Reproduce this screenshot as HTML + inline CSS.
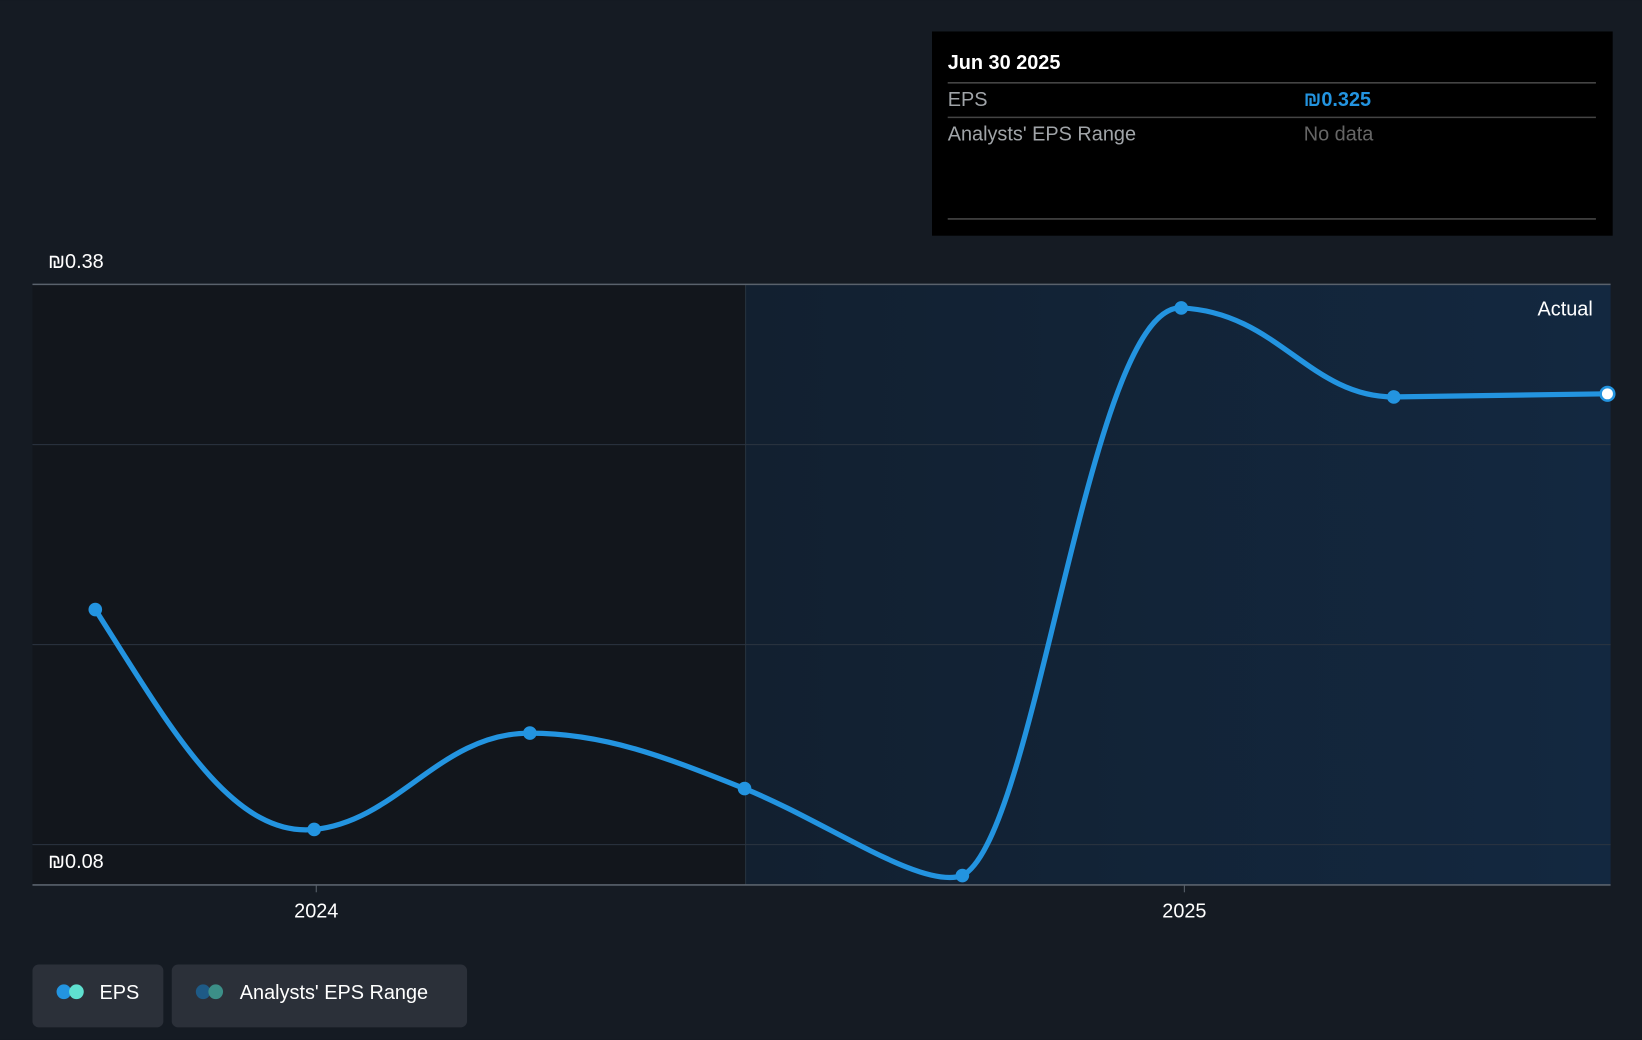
<!DOCTYPE html>
<html><head><meta charset="utf-8"><style>
html,body{margin:0;padding:0;background:#151b23;overflow:hidden}
svg{display:block}
text{font-family:"Liberation Sans",sans-serif}
</style></head><body>
<svg width="1642" height="1040" viewBox="0 0 1568 993" xmlns="http://www.w3.org/2000/svg">
<defs>
<linearGradient id="fg" x1="0" x2="1" y1="0" y2="0">
<stop offset="0" stop-color="#122030"/><stop offset="1" stop-color="#132840"/>
</linearGradient>
</defs>
<rect width="1568" height="993" fill="#151b23"/>
<rect x="31" y="271" width="681" height="574" fill="#12161c"/>
<rect x="712" y="271" width="826" height="574" fill="url(#fg)"/>
<line x1="712" y1="271" x2="712" y2="845" stroke="#26323e" stroke-width="1"/>
<g stroke="#2c3540" stroke-width="1">
<line x1="31" y1="424.5" x2="1538" y2="424.5"/>
<line x1="31" y1="615.5" x2="1538" y2="615.5"/>
<line x1="31" y1="806.5" x2="1538" y2="806.5"/>
</g>
<line x1="31" y1="271.5" x2="1538" y2="271.5" stroke="#5a626c" stroke-width="1.5"/>
<line x1="31" y1="845" x2="1538" y2="845" stroke="#5a626c" stroke-width="1.5"/>
<line x1="302" y1="845" x2="302" y2="852" stroke="#5a626c"/>
<line x1="1131" y1="845" x2="1131" y2="852" stroke="#5a626c"/>
<text x="46" y="256" fill="#fff" font-size="19">₪0.38</text>
<text x="46" y="829" fill="#fff" font-size="19">₪0.08</text>
<text x="302" y="876" fill="#fff" font-size="19" text-anchor="middle">2024</text>
<text x="1131" y="876" fill="#fff" font-size="19" text-anchor="middle">2025</text>
<text x="1521" y="301" fill="#fff" font-size="19" text-anchor="end">Actual</text>
<path d="M91,582 C160,690 220,800 300,792 C380,784 420,700 506,700 C580,700 640,725 711,753 C790,785 880,850 919,836 C990,800 1040,290 1128,294 C1220,298 1250,379 1331,379 L1535,376" fill="none" stroke="#2394e0" stroke-width="5" stroke-linecap="round"/>
<g fill="#2394e0">
<circle cx="91" cy="582" r="6.5"/><circle cx="300" cy="792" r="6.5"/><circle cx="506" cy="700" r="6.5"/>
<circle cx="711" cy="753" r="6.5"/><circle cx="919" cy="836" r="6.5"/><circle cx="1128" cy="294" r="6.5"/>
<circle cx="1331" cy="379" r="6.5"/>
</g>
<circle cx="1535" cy="376" r="6.5" fill="#fff" stroke="#2394e0" stroke-width="2.5"/>
<rect x="890" y="30" width="650" height="195" fill="#000"/>
<text x="905" y="66" fill="#fff" font-size="19" font-weight="bold">Jun 30 2025</text>
<line x1="905" y1="79" x2="1524" y2="79" stroke="#444" stroke-width="1.5"/>
<text x="905" y="101" fill="#a0a4a8" font-size="19">EPS</text>
<text x="1245" y="101" fill="#2394e0" font-size="19" font-weight="bold">₪0.325</text>
<line x1="905" y1="112" x2="1524" y2="112" stroke="#444" stroke-width="1.5"/>
<text x="905" y="134" fill="#a0a4a8" font-size="19">Analysts' EPS Range</text>
<text x="1245" y="134" fill="#666" font-size="19">No data</text>
<line x1="905" y1="209" x2="1524" y2="209" stroke="#444" stroke-width="1.5"/>
<rect x="31" y="921" width="125" height="60" rx="6" fill="#2b3039"/>
<circle cx="61" cy="947" r="7" fill="#2394e0"/><circle cx="73" cy="947" r="7" fill="#5fe0d0"/>
<text x="95" y="954" fill="#fff" font-size="19">EPS</text>
<rect x="164" y="921" width="282" height="60" rx="6" fill="#2b3039"/>
<circle cx="194" cy="947" r="7" fill="#1e5a86"/><circle cx="206" cy="947" r="7" fill="#3c8f88"/>
<text x="229" y="954" fill="#fff" font-size="19">Analysts' EPS Range</text>
</svg>
</body></html>
